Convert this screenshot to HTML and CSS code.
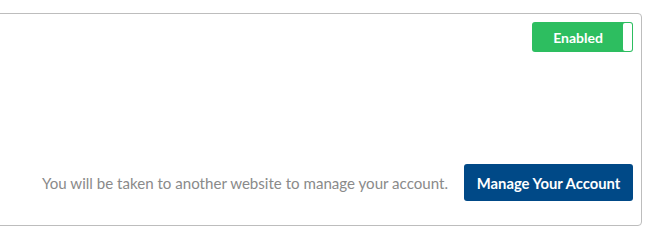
FILE: index.html
```html
<!DOCTYPE html>
<html>
<head>
<meta charset="utf-8">
<link rel="stylesheet" href="styles.css">
</head>
<body>
<div class="card">
  <div class="top-row">
    <div class="toggle">
      <span class="toggle-label">Enabled</span>
      <span class="toggle-knob"></span>
    </div>
  </div>
  <div class="bottom-row">
    <span class="note">You will be taken to another website to manage your account.</span>
    <button class="manage-btn">Manage Your Account</button>
  </div>
</div>
</body>
</html>
```
FILE: styles.css
```css
html, body {
  margin: 0;
  padding: 0;
  background: #ffffff;
}
body {
  font-family: Lato, "Open Sans", sans-serif;
}
.card {
  box-sizing: border-box;
  margin: 13px 23px 0 -12px;
  height: 213px;
  border: 1px solid #bdbdbd;
  border-radius: 4px;
  padding: 8px 8px 24px 8px;
  display: flex;
  flex-direction: column;
  justify-content: space-between;
}
.top-row {
  display: flex;
  justify-content: flex-end;
}
.toggle {
  box-sizing: border-box;
  width: 101px;
  height: 30px;
  background: #2dbe60;
  border-radius: 3px;
  padding: 1px;
  display: flex;
  align-items: stretch;
}
.toggle-label {
  flex: 1;
  display: flex;
  align-items: center;
  justify-content: center;
  color: #ffffff;
  font-size: 14px;
  font-weight: 700;
}
.toggle-knob {
  width: 9px;
  background: #ffffff;
  border-radius: 2px;
}
.bottom-row {
  display: flex;
  justify-content: flex-end;
  align-items: center;
  gap: 16px;
}
.note {
  color: #8a8a8a;
  font-size: 15.1px;
}
.manage-btn {
  box-sizing: border-box;
  height: 37px;
  width: 169px;
  border: none;
  border-radius: 3px;
  background: #004987;
  color: #ffffff;
  font-family: Lato, "Open Sans", sans-serif;
  font-size: 14.8px;
  font-weight: 700;
  padding: 0;
  cursor: pointer;
}
```
